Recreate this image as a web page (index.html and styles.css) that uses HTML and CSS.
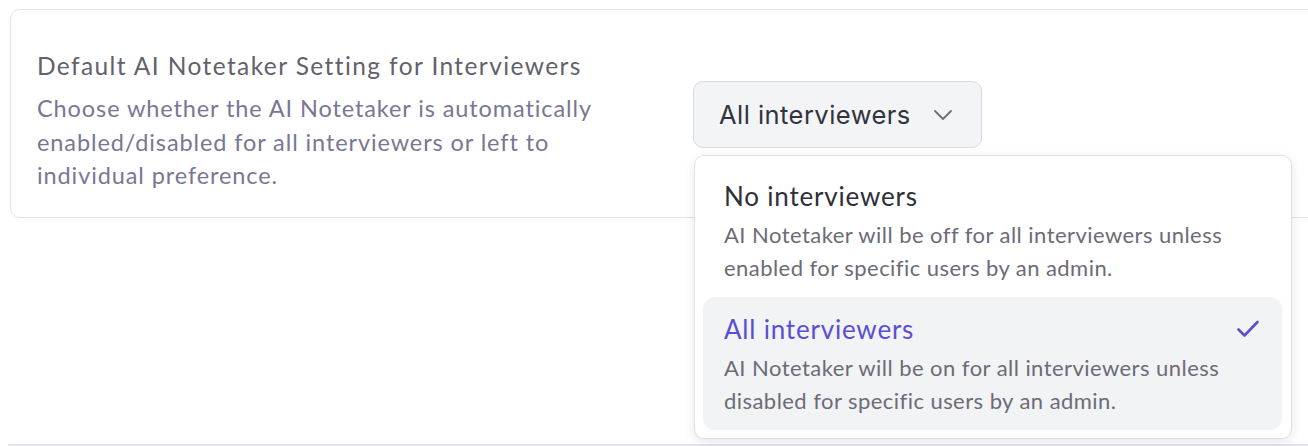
FILE: index.html
```html
<!DOCTYPE html>
<html>
<head>
<meta charset="utf-8">
<link rel="stylesheet" href="styles.css">
</head>
<body>
<div class="page">
  <section class="card">
    <div class="info">
      <h2 class="title">Default AI Notetaker Setting for Interviewers</h2>
      <p class="desc">Choose whether the AI Notetaker is automatically enabled/disabled for all interviewers or left to individual preference.</p>
    </div>
    <div class="control">
      <button class="select" type="button">
        <span class="select-label">All interviewers</span>
        <svg class="chevron" width="20" height="12" viewBox="0 0 20 12" fill="none"><path d="M2 2l8 8 8-8" stroke="#6e6e78" stroke-width="1.8" stroke-linecap="round" stroke-linejoin="round"/></svg>
      </button>
      <div class="menu">
        <div class="option">
          <div class="opt-head"><span class="opt-title">No interviewers</span></div>
          <div class="opt-desc">AI Notetaker will be off for all interviewers unless enabled for specific users by an admin.</div>
        </div>
        <div class="option selected">
          <div class="opt-head"><span class="opt-title">All interviewers</span>
            <svg class="check" width="24" height="20" viewBox="0 0 24 20" fill="none"><path d="M2.5 10.5l6 6L21.5 3" stroke="#5a4fd3" stroke-width="2.6" stroke-linecap="round" stroke-linejoin="round"/></svg>
          </div>
          <div class="opt-desc">AI Notetaker will be on for all interviewers unless disabled for specific users by an admin.</div>
        </div>
      </div>
    </div>
  </section>
  <div class="divider"></div>
</div>
</body>
</html>
```
FILE: styles.css
```css
* { box-sizing: border-box; }
html, body { margin: 0; padding: 0; background: #ffffff; overflow: hidden; }
body { width: 1308px; height: 446px; font-family: Lato, "Noto Sans", sans-serif; }
.page { padding: 9px 0 0 10px; }
.card {
  width: 1340px;
  height: 209px;
  border: 1.5px solid #e3e3ea;
  border-radius: 10px;
  display: flex;
  padding: 40px 26px 0 26px;
}
.info { width: 656px; }
.title {
  margin: 0;
  font-size: 24.5px;
  line-height: 32px;
  font-weight: 400;
  letter-spacing: 1.4px;
  color: #62616c;
}
.desc {
  margin: 10px 0 0 0;
  font-size: 23.5px;
  line-height: 33.5px;
  letter-spacing: 0.9px;
  color: #7b7693;
  width: 575px;
}
.control { position: relative; padding-top: 31px; }
.select {
  width: 289px;
  height: 67px;
  background: #f3f4f6;
  border: 1.5px solid #d9d9e1;
  border-radius: 10px;
  display: flex;
  align-items: center;
  padding: 0 0 0 25px;
  gap: 22px;
  font-family: Inter, "Noto Sans", sans-serif;
  font-size: 25.5px;
  letter-spacing: 0.45px;
  color: #33333d;
  cursor: pointer;
}
.menu {
  position: absolute;
  left: 1px;
  top: 105px;
  width: 598px;
  background: #ffffff;
  border: 1.5px solid #dfdfe6;
  border-radius: 10px;
  box-shadow: 0 4px 12px rgba(30, 30, 60, 0.10);
  padding: 8px 9px 8px 8px;
  z-index: 2;
}
.option {
  height: 133px;
  border-radius: 12px;
  padding: 13px 21px 0 21px;
}
.option.selected { background: #f2f3f5; }
.opt-head { display: flex; align-items: center; justify-content: space-between; height: 38px; }
.opt-title { font-size: 26px; line-height: 38px; letter-spacing: 0.8px; color: #2f2f39; }
.selected .opt-title { color: #5a4fd3; }
.check { margin-right: 1px; }
.opt-desc {
  margin-top: 3px;
  font-size: 22px;
  line-height: 33px;
  letter-spacing: 0.45px;
  color: #6c6b77;
  width: 520px;
}
.divider {
  margin-top: 226px;
  margin-left: -2px;
  height: 2px;
  background: #e4e4ea;
}
```
